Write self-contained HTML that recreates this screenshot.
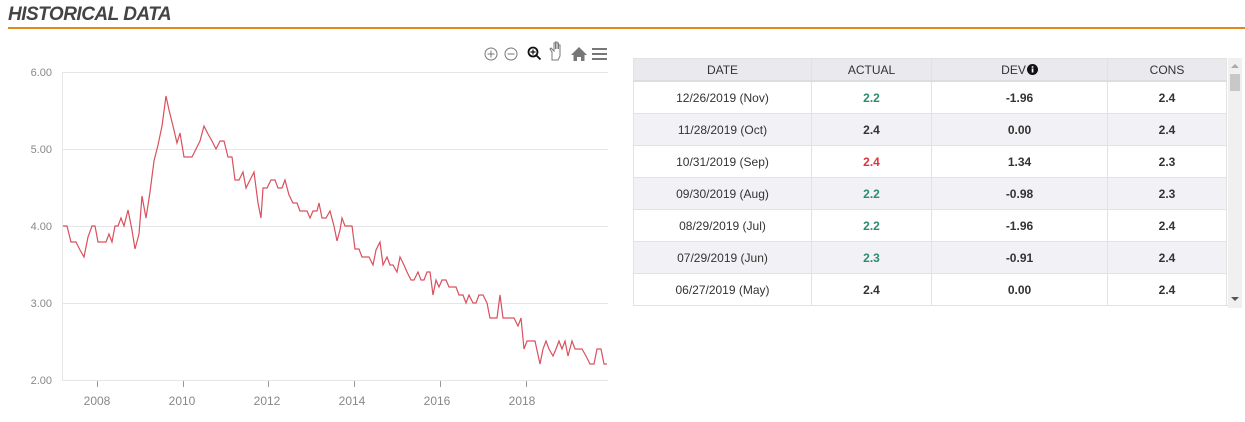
<!DOCTYPE html>
<html><head><meta charset="utf-8"><style>
body{margin:0;width:1245px;height:421px;background:#fff;font-family:"Liberation Sans",sans-serif;position:relative;overflow:hidden}
.title{position:absolute;left:8px;top:4px;font-size:19px;font-weight:bold;font-style:italic;color:#444;letter-spacing:-0.5px}
.rule{position:absolute;left:8px;top:27px;width:1237px;height:2px;background:#e08a1e}
table{position:absolute;left:633px;top:58px;border-collapse:collapse;width:594px;font-size:12px;color:#333}
td,th{border:1px solid #e2e2e2;text-align:center;height:31px;padding:0}
th{font-weight:normal;height:21px;background:#e9e9ee;border-bottom:2px solid #ddd;font-size:12px}
tr.g td{background:#f2f2f6}
td.b{font-weight:bold}
.gr{color:#2e8b6e}.rd{color:#d9363e}
.sb{position:absolute;left:1228px;top:58px;width:14px;height:250px;background:#f0f0f0}
</style></head><body>
<div class="title">HISTORICAL DATA</div>
<div class="rule"></div>
<svg width="620" height="421" style="position:absolute;left:0;top:0" font-family="Liberation Sans" font-size="11" fill="#888">
<g stroke="#e6e6e6" stroke-width="1"><line x1="63" y1="72.5" x2="608" y2="72.5"/><line x1="63" y1="149.5" x2="608" y2="149.5"/><line x1="63" y1="226.5" x2="608" y2="226.5"/><line x1="63" y1="303.5" x2="608" y2="303.5"/><line x1="63" y1="380.5" x2="608" y2="380.5"/><line x1="62.5" y1="72" x2="62.5" y2="381"/></g>
<g stroke="#999"><line x1="97.5" y1="381" x2="97.5" y2="387"/><line x1="183.5" y1="381" x2="183.5" y2="387"/><line x1="268.5" y1="381" x2="268.5" y2="387"/><line x1="354.5" y1="381" x2="354.5" y2="387"/><line x1="440.5" y1="381" x2="440.5" y2="387"/><line x1="526.5" y1="381" x2="526.5" y2="387"/></g>
<g text-anchor="end"><text x="52" y="76">6.00</text><text x="52" y="153">5.00</text><text x="52" y="230">4.00</text><text x="52" y="307">3.00</text><text x="52" y="384">2.00</text></g>
<g text-anchor="middle" font-size="12"><text x="97" y="405">2008</text><text x="182" y="405">2010</text><text x="267" y="405">2012</text><text x="352" y="405">2014</text><text x="437" y="405">2016</text><text x="522" y="405">2018</text></g>
<polyline fill="none" stroke="#d9505e" stroke-width="1.2" points="63,226 67,226 71,242 76,242 80,250 84,257 88,237 92,226 95,226 98,242 103,242 106,242 109,234 112,242 115,226 118,226 121,218 124,226 128,210 132,230 135,249 139,234 142,196 146,218 150,192 154,161 158,145 162,126 166,96 169,110 173,126 177,143 180,133 184,157 188,157 192,157 196,149 200,141 204,126 208,134 212,141 216,149 220,141 224,141 228,157 232,157 235,180 239,180 243,172 246,188 250,180 254,172 258,203 261,218 263,188 267,188 271,180 275,180 278,188 282,188 285,180 289,195 293,203 297,203 300,211 304,211 307,211 310,218 313,211 317,211 319,203 322,218 326,218 330,211 334,226 337,241 340,230 342,218 345,226 349,226 352,226 355,249 359,249 362,257 366,257 369,257 373,265 376,250 380,242 383,265 387,257 390,265 393,265 397,272 400,257 404,265 407,272 411,280 414,280 418,272 421,280 424,280 427,272 430,272 433,295 436,280 439,287 442,280 446,280 449,287 452,287 456,287 459,295 463,295 466,303 469,295 473,303 476,303 479,295 483,295 487,303 490,318 494,318 497,318 500,295 503,318 507,318 511,318 514,318 518,326 521,318 524,349 527,341 531,341 535,341 540,364 543,349 546,341 549,349 553,356 556,349 559,341 562,349 565,341 568,356 572,341 575,349 578,349 582,349 586,356 590,364 594,364 597,349 601,349 604,364 607,364"/>
<g fill="none" stroke="#777" stroke-width="1"><circle cx="491" cy="54" r="6"/><path d="M487.5 54h7M491 50.5v7"/><circle cx="511" cy="54" r="6"/><path d="M507.5 54h7"/></g>
<g fill="none" stroke="#111" stroke-width="1.8"><circle cx="533" cy="52" r="4.5"/><path d="M536.5 55.5l4 4"/><path d="M530.5 52h5M533 49.5v5" stroke-width="1.2"/></g>
<path d="M552 60v-8l-2-3 1-1 3 3v-8h1.5v6-7h1.5v7-6h1.5v6-4h1.5v11l-2 4z" fill="#fff" stroke="#777" stroke-width="1"/>
<path d="M571 55l8-8 8 8h-2.5v6h-3.5v-4h-4v4h-3.5v-6z" fill="#777"/>
<g stroke="#777" stroke-width="2"><line x1="592" y1="49" x2="607" y2="49"/><line x1="592" y1="54" x2="607" y2="54"/><line x1="592" y1="59" x2="607" y2="59"/></g>
</svg>
<table>
<tr><th style="width:177px">DATE</th><th style="width:119px">ACTUAL</th><th style="width:175px">DEV<svg width="11" height="11" style="vertical-align:-1px;margin-left:1px"><circle cx="5.5" cy="5.5" r="5.5" fill="#111"/><rect x="4.7" y="4.5" width="1.7" height="4" fill="#fff"/><rect x="4.7" y="2.2" width="1.7" height="1.5" fill="#fff"/></svg></th><th>CONS</th></tr>
<tr><td>12/26/2019 (Nov)</td><td class="b gr">2.2</td><td class="b">-1.96</td><td class="b">2.4</td></tr>
<tr class="g"><td>11/28/2019 (Oct)</td><td class="b">2.4</td><td class="b">0.00</td><td class="b">2.4</td></tr>
<tr><td>10/31/2019 (Sep)</td><td class="b rd">2.4</td><td class="b">1.34</td><td class="b">2.3</td></tr>
<tr class="g"><td>09/30/2019 (Aug)</td><td class="b gr">2.2</td><td class="b">-0.98</td><td class="b">2.3</td></tr>
<tr><td>08/29/2019 (Jul)</td><td class="b gr">2.2</td><td class="b">-1.96</td><td class="b">2.4</td></tr>
<tr class="g"><td>07/29/2019 (Jun)</td><td class="b gr">2.3</td><td class="b">-0.91</td><td class="b">2.4</td></tr>
<tr><td>06/27/2019 (May)</td><td class="b">2.4</td><td class="b">0.00</td><td class="b">2.4</td></tr>
</table>
<div style="position:absolute;left:633px;top:305px;width:595px;height:116px;background:#fff;border-top:1px solid #e2e2e2"></div>
<div class="sb"><div style="position:absolute;left:2px;top:16px;width:10px;height:17px;background:#c8c8c8"></div>
<div style="position:absolute;left:3px;top:6px;border:4px solid transparent;border-bottom:4px solid #aaa;border-top:0"></div>
<div style="position:absolute;left:3px;top:239px;border:4px solid transparent;border-top:4px solid #555;border-bottom:0"></div></div>
</body></html>
